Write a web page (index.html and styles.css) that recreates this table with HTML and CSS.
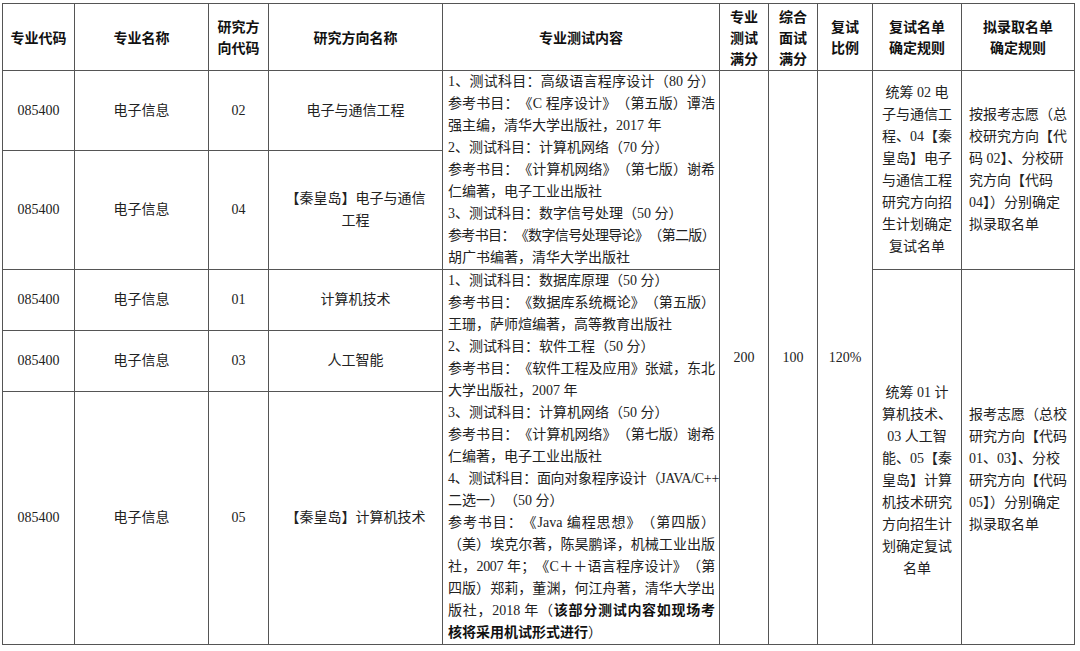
FILE: index.html
```html
<!DOCTYPE html>
<html lang="zh-CN">
<head>
<meta charset="utf-8">
<title>专业测试内容</title>
<link rel="stylesheet" href="styles.css">
</head>
<body>
<div class="page">
<table class="grid">
  <colgroup>
    <col class="c1"><col class="c2"><col class="c3"><col class="c4"><col class="c5">
    <col class="c6"><col class="c7"><col class="c8"><col class="c9"><col class="c10">
  </colgroup>
  <thead>
    <tr class="hd">
      <th>专业代码</th>
      <th>专业名称</th>
      <th>研究方<br>向代码</th>
      <th>研究方向名称</th>
      <th>专业测试内容</th>
      <th>专业<br>测试<br>满分</th>
      <th>综合<br>面试<br>满分</th>
      <th>复试<br>比例</th>
      <th>复试名单<br>确定规则</th>
      <th>拟录取名单<br>确定规则</th>
    </tr>
  </thead>
  <tbody>
    <tr class="r1">
      <td>085400</td>
      <td>电子信息</td>
      <td>02</td>
      <td>电子与通信工程</td>
      <td class="content" rowspan="2">
        <div class="ln j">1、测试科目：高级语言程序设计（80 分）</div>
        <div class="ln j">参考书目：《C 程序设计》（第五版）谭浩</div>
        <div class="ln">强主编，清华大学出版社，2017 年</div>
        <div class="ln">2、测试科目：计算机网络（70 分）</div>
        <div class="ln j">参考书目：《计算机网络》（第七版）谢希</div>
        <div class="ln">仁编著，电子工业出版社</div>
        <div class="ln">3、测试科目：数字信号处理（50 分）</div>
        <div class="ln j t">参考书目：《数字信号处理导论》（第二版）</div>
        <div class="ln">胡广书编著，清华大学出版社</div>
      </td>
      <td rowspan="5">200</td>
      <td rowspan="5">100</td>
      <td rowspan="5">120%</td>
      <td class="rule" rowspan="2">统筹 02 电<br>子与通信工<br>程、04【秦<br>皇岛】电子<br>与通信工程<br>研究方向招<br>生计划确定<br>复试名单</td>
      <td class="adm" rowspan="2">按报考志愿（总<br>校研究方向【代<br>码 02】、分校研<br>究方向【代码<br>04】）分别确定<br>拟录取名单</td>
    </tr>
    <tr class="r2">
      <td>085400</td>
      <td>电子信息</td>
      <td>04</td>
      <td>【秦皇岛】电子与通信<br>工程</td>
    </tr>
    <tr class="r3">
      <td>085400</td>
      <td>电子信息</td>
      <td>01</td>
      <td>计算机技术</td>
      <td class="content" rowspan="3">
        <div class="ln">1、测试科目：数据库原理（50 分）</div>
        <div class="ln j">参考书目：《数据库系统概论》（第五版）</div>
        <div class="ln">王珊，萨师煊编著，高等教育出版社</div>
        <div class="ln">2、测试科目：软件工程（50 分）</div>
        <div class="ln j">参考书目：《软件工程及应用》张斌，东北</div>
        <div class="ln">大学出版社，2007 年</div>
        <div class="ln">3、测试科目：计算机网络（50 分）</div>
        <div class="ln j">参考书目：《计算机网络》（第七版）谢希</div>
        <div class="ln">仁编著，电子工业出版社</div>
        <div class="ln j t2">4、测试科目：面向对象程序设计（JAVA/C++</div>
        <div class="ln">二选一）（50 分）</div>
        <div class="ln j">参考书目：《Java 编程思想》（第四版）</div>
        <div class="ln j">（美）埃克尔著，陈昊鹏译，机械工业出版</div>
        <div class="ln j t2">社，2007 年；《C＋＋语言程序设计》（第</div>
        <div class="ln j">四版）郑莉，董渊，何江舟著，清华大学出</div>
        <div class="ln j">版社，2018 年（<b>该部分测试内容如现场考</b></div>
        <div class="ln"><b>核将采用机试形式进行</b>）</div>
      </td>
      <td class="rule low" rowspan="3">统筹 01 计<br>算机技术、<br>03 人工智<br>能、05【秦<br>皇岛】计算<br>机技术研究<br>方向招生计<br>划确定复试<br>名单</td>
      <td class="adm lower" rowspan="3">报考志愿（总校<br>研究方向【代码<br>01、03】、分校<br>研究方向【代码<br>05】）分别确定<br>拟录取名单</td>
    </tr>
    <tr class="r4">
      <td>085400</td>
      <td>电子信息</td>
      <td>03</td>
      <td>人工智能</td>
    </tr>
    <tr class="r5">
      <td>085400</td>
      <td>电子信息</td>
      <td>05</td>
      <td>【秦皇岛】计算机技术</td>
    </tr>
  </tbody>
</table>
</div>
</body>
</html>
```

FILE: styles.css
```css
html, body {
  margin: 0;
  padding: 0;
  background: #ffffff;
}

body {
  font-family: "Liberation Serif", "Noto Sans CJK SC", serif;
  color: #222222;
}

.page {
  padding: 3px 0 0 2px;
}

.grid {
  border-collapse: collapse;
  table-layout: fixed;
  width: 1072px;
  font-size: 14px;
  line-height: 22px;
}

.c1 { width: 72px; }
.c2 { width: 134px; }
.c3 { width: 60px; }
.c4 { width: 174px; }
.c5 { width: 277px; }
.c6 { width: 49px; }
.c7 { width: 49px; }
.c8 { width: 55px; }
.c9 { width: 89px; }
.c10 { width: 113px; }

.grid th,
.grid td {
  border: 1px solid #555555;
  padding: 0 4px;
  text-align: center;
  vertical-align: middle;
  font-weight: 400;
}

.grid th {
  font-family: "Noto Sans CJK SC", sans-serif;
  font-weight: 700;
  color: #111111;
  line-height: 21px;
}

.hd { height: 67px; }
.r1 { height: 80px; }
.r2 { height: 118px; }
.r3 { height: 61px; }
.r4 { height: 61px; }
.r5 { height: 253px; }

.grid td.content {
  text-align: left;
  padding: 0 4px 0 5px;
  text-spacing-trim: space-all;
}

.ln {
  white-space: nowrap;
  text-align: left;
}

.ln.j {
  text-align: justify;
  text-align-last: justify;
}

.ln.t { letter-spacing: -0.7px; }
.ln.t2 { letter-spacing: -0.3px; }

.ln b {
  font-weight: 700;
  color: #111111;
}

.grid td.rule {
  padding: 0 8px;
  white-space: nowrap;
}

.grid td.rule.low {
  padding-top: 48px;
}

.grid td.adm {
  text-align: left;
  padding: 0 4px 0 7px;
  white-space: nowrap;
}

.grid td.adm.lower {
  padding-top: 25px;
}
```
